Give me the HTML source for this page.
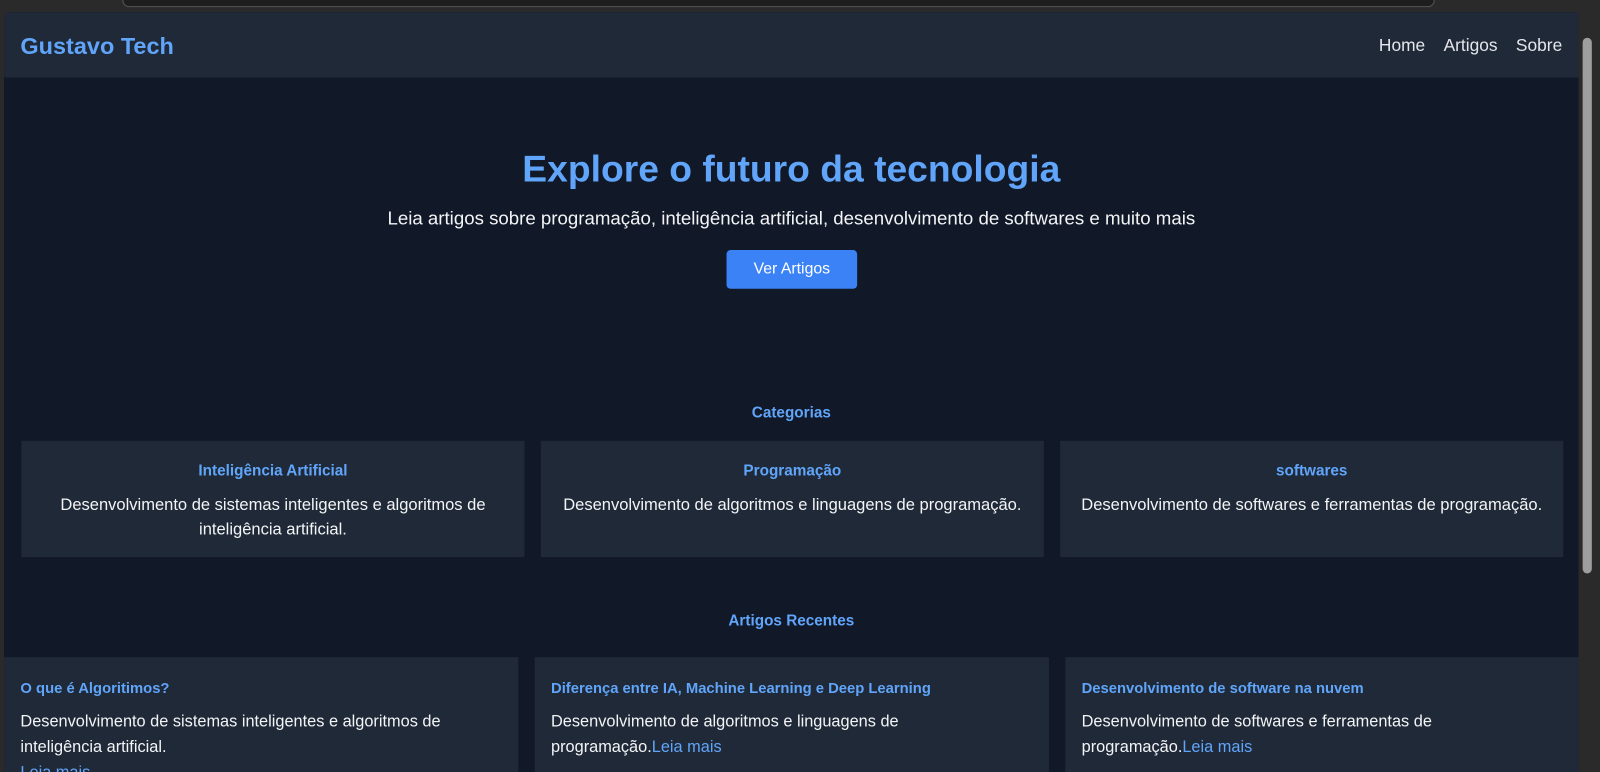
<!DOCTYPE html>
<html><head><meta charset="utf-8"><style>
*{margin:0;padding:0;box-sizing:border-box}
html,body{width:1600px;height:767px;overflow:hidden;background:#2a2a2a;font-family:"Liberation Sans",sans-serif}
.wrap{position:absolute;left:0;top:0;width:1568px;height:752px;transform:scale(1.0204);transform-origin:0 0}
.chrome{position:absolute;left:0;top:0;width:1568px;height:12px;background:#2a2a2a}
.tab{position:absolute;left:120px;top:-6px;width:1286px;height:13px;border:1px solid #555;border-radius:8px;background:#1e1e1e}
.page{position:absolute;left:4px;top:12px;width:1543px;height:745px;background:#111827;overflow:hidden;border-top-left-radius:6px}
nav{height:64px;background:#1f2937;position:relative}
.logo{position:absolute;left:16px;top:20px;color:#60a5fa;font-weight:bold;font-size:23px}
.links{position:absolute;right:16px;top:23px;color:#e5e7eb;font-size:17px}
.links span{margin-left:18px}
.sb{position:absolute;left:1547px;top:12px;width:18px;height:745px;background:#2a2a2a}
.thumb{position:absolute;left:4px;top:25px;width:9px;height:525px;background:#9e9e9e;border-radius:5px}
.t{position:absolute;left:0;width:1543px;text-align:center}
h1{color:#60a5fa;font-size:36.5px;font-weight:bold}
.sub{color:#f3f4f6;font-size:18.3px;top:191px}
.btn{position:absolute;left:708px;top:233px;width:128px;height:38px;background:#3b82f6;color:#fff;border-radius:4px;font-size:15.5px;text-align:center;line-height:38px}
.h2{color:#60a5fa;font-weight:bold;font-size:15px}
.card{position:absolute;background:#1f2937;color:#f3f4f6;font-size:16px}
.cat{top:420px;height:114px;width:493px;text-align:center;padding:0 8px}
.cat b{display:block;color:#60a5fa;font-size:15px;margin-top:21px;margin-bottom:13px}
.cat p{line-height:24px;font-size:16.2px}
.art{top:632px;height:140px;width:504px;padding:0 16px}
.art b{display:block;color:#60a5fa;font-size:14.5px;margin-top:23px;margin-bottom:12px}
.art p{line-height:25px}
a{color:#60a5fa}
</style></head><body>
<div class="wrap">
<div class="chrome"><div class="tab"></div></div>
<div class="page">
<nav><div class="logo">Gustavo Tech</div><div class="links"><span>Home</span><span>Artigos</span><span>Sobre</span></div></nav>
<div class="t" style="top:133px"><h1>Explore o futuro da tecnologia</h1></div>
<div class="t sub">Leia artigos sobre programação, inteligência artificial, desenvolvimento de softwares e muito mais</div>
<div class="btn">Ver Artigos</div>
<div class="t h2" style="top:384px">Categorias</div>
<div class="card cat" style="left:17px"><b>Inteligência Artificial</b><p style="padding:0 20px">Desenvolvimento de sistemas inteligentes e algoritmos de inteligência artificial.</p></div>
<div class="card cat" style="left:526px"><b>Programação</b><p>Desenvolvimento de algoritmos e linguagens de programação.</p></div>
<div class="card cat" style="left:1035px"><b>softwares</b><p>Desenvolvimento de softwares e ferramentas de programação.</p></div>
<div class="t h2" style="top:588px">Artigos Recentes</div>
<div class="card art" style="left:0"><b>O que é Algoritimos?</b><p>Desenvolvimento de sistemas inteligentes e algoritmos de inteligência artificial.<br><a>Leia mais</a></p></div>
<div class="card art" style="left:520px"><b>Diferença entre IA, Machine Learning e Deep Learning</b><p>Desenvolvimento de algoritmos e linguagens de programação.<a>Leia mais</a></p></div>
<div class="card art" style="left:1040px"><b>Desenvolvimento de software na nuvem</b><p>Desenvolvimento de softwares e ferramentas de programação.<a>Leia mais</a></p></div>
</div>
<div class="sb"><div class="thumb"></div></div>
</div>
</body></html>
